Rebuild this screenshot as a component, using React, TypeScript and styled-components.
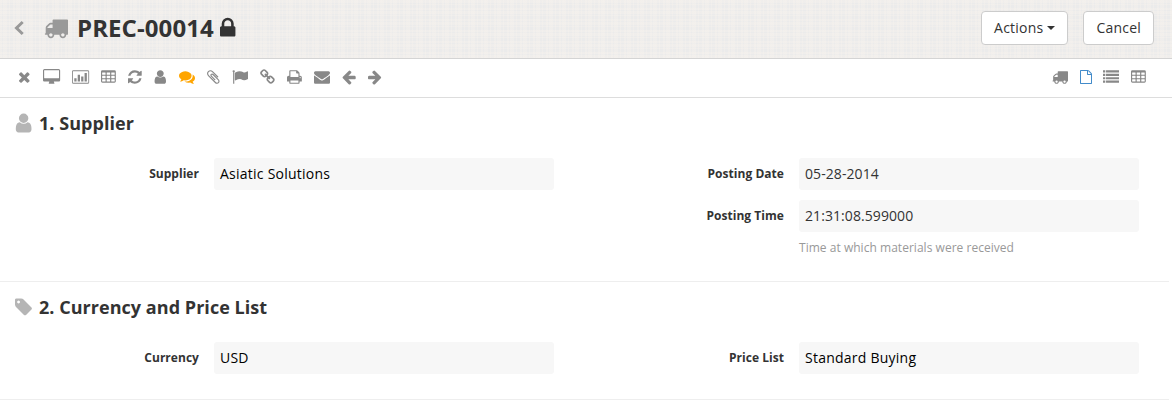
import React from "react";
import styled, { createGlobalStyle } from "styled-components";

const Global = createGlobalStyle`
  * { box-sizing: border-box; }
  body { margin: 0; background: #fff; color: #333; font: 14px/20px "Open Sans", sans-serif; }
`;

type Glyph = { x: number; w: number; d: string };

const glyphs: Record<string, Glyph> = {
  close: { x: 192, w: 1408, d: "M1490 1322q0 40-28 68l-136 136q-28 28-68 28t-68-28l-294-294-294 294q-28 28-68 28t-68-28l-136-136q-28-28-28-68t28-68l294-294-294-294q-28-28-28-68t28-68l136-136q28-28 68-28t68 28l294 294 294-294q28-28 68-28t68 28l136 136q28 28 28 68t-28 68l-294 294 294 294q28 28 28 68z" },
  desktop: { x: -64, w: 1920, d: "M1728 992v-832q0-13-9.5-22.5t-22.5-9.5h-1600q-13 0-22.5 9.5t-9.5 22.5v832q0 13 9.5 22.5t22.5 9.5h1600q13 0 22.5-9.5t9.5-22.5zm128-832v1088q0 66-47 113t-113 47h-544q0 37 16 77.5t32 71 16 43.5q0 26-19 45t-45 19h-512q-26 0-45-19t-19-45q0-14 16-44t32-70 16-78h-544q-66 0-113-47t-47-113v-1088q0-66 47-113t113-47h1600q66 0 113 47t47 113z" },
  chart: { x: 0, w: 1920, d: "M512 1024v384h-256v-384zM896 640v768h-256v-768zM1280 832v576h-256v-576zM1664 448v960h-256v-960zM1792 1536q32 0 32-32v-1216q0-32-32-32h-1664q-32 0-32 32v1216q0 32 32 32zM1920 288v1216q0 160-160 160h-1600q-160 0-160-160v-1216q0-160 160-160h1600q160 0 160 160z" },
  table: { x: 64, w: 1664, d: "M576 1376v-192q0-32-32-32h-320q-32 0-32 32v192q0 32 32 32h320q32 0 32-32zM576 992v-192q0-32-32-32h-320q-32 0-32 32v192q0 32 32 32h320q32 0 32-32zM1088 1376v-192q0-32-32-32h-320q-32 0-32 32v192q0 32 32 32h320q32 0 32-32zM576 608v-192q0-32-32-32h-320q-32 0-32 32v192q0 32 32 32h320q32 0 32-32zM1088 992v-192q0-32-32-32h-320q-32 0-32 32v192q0 32 32 32h320q32 0 32-32zM1600 1376v-192q0-32-32-32h-320q-32 0-32 32v192q0 32 32 32h320q32 0 32-32zM1088 608v-192q0-32-32-32h-320q-32 0-32 32v192q0 32 32 32h320q32 0 32-32zM1600 992v-192q0-32-32-32h-320q-32 0-32 32v192q0 32 32 32h320q32 0 32-32zM1600 608v-192q0-32-32-32h-320q-32 0-32 32v192q0 32 32 32h320q32 0 32-32zM1728 288v1088q0 160-160 160h-1344q-160 0-160-160v-1088q0-160 160-160h1344q160 0 160 160z" },
  refresh: { x: 128, w: 1536, d: "M1639 1056q0 5-1 7-64 268-268 434.5t-478 166.5q-146 0-282.5-55t-243.5-157l-129 129q-19 19-45 19t-45-19-19-45v-448q0-26 19-45t45-19h448q26 0 45 19t19 45-19 45l-137 137q71 66 161 102t187 36q134 0 250-65t186-179q11-17 53-117 8-23 30-23h192q13 0 22.5 9.5t9.5 22.5zm25-800v448q0 26-19 45t-45 19h-448q-26 0-45-19t-19-45 19-45l138-138q-148-137-349-137-134 0-250 65t-186 179q-11 17-53 117-8 23-30 23h-199q-13 0-22.5-9.5t-9.5-22.5v-7q65-268 270-434.5t480-166.5q146 0 284 55.5t245 156.5l130-129q19-19 45-19t45 19 19 45z" },
  user: { x: 192, w: 1408, d: "M1536 1399q0 109-62.5 187t-150.5 78h-854q-88 0-150.5-78t-62.5-187q0-85 8.5-160.5t31.5-152 58.5-131 94-89 134.5-34.5q131 128 313 128t313-128q76 0 134.5 34.5t94 89 58.5 131 31.5 152 8.5 160.5zm-256-887q0 159-112.5 271.5t-271.5 112.5-271.5-112.5-112.5-271.5 112.5-271.5 271.5-112.5 271.5 112.5 112.5 271.5z" },
  comments: { x: 0, w: 1792, d: "M1408 768q0 139-94 257t-256.5 186.5-353.5 68.5q-86 0-176-16-124 88-278 128-36 9-86 16h-3q-11 0-20.5-8t-11.5-21q-1-3-1-6.5t.5-6.5 2-6l2.5-5 3.5-5.5 4-5 4.5-5 4-4.5q5-6 23-25t26-29.5 22.5-29 25-38.5 20.5-44q-124-72-195-177t-71-224q0-139 94-257t256.5-186.5 353.5-68.5 353.5 68.5 256.5 186.5 94 257zm384 256q0 120-71 224.5t-195 176.5q10 24 20.5 44t25 38.5 22.5 29 26 29.5 23 25q1 1 4 4.5t4.5 5 4 5 3.5 5.5l2.5 5 2 6 .5 6.5-1 6.5q-3 14-13 22t-22 7q-50-7-86-16-154-40-278-128-90 16-176 16-271 0-472-132 58 4 88 4 161 0 309-45t264-129q125-92 192-212t67-254q0-77-23-152 129 71 204 178t75 230z" },
  clip: { x: 192, w: 1408, d: "M1596 1385q0 117-79 196t-196 79q-135 0-235-100l-777-776q-113-115-113-271 0-159 110-270t269-111q158 0 273 113l605 606q10 10 10 22 0 16-30.5 46.5t-46.5 30.5q-13 0-23-10l-606-607q-79-77-181-77-106 0-179 75t-73 181q0 105 76 181l776 777q63 63 145 63 64 0 106-42t42-106q0-82-63-145l-581-581q-26-24-60-24-29 0-48 19t-19 48q0 32 25 59l410 410q10 10 10 22 0 16-31 47t-47 31q-12 0-22-10l-410-410q-63-61-63-149 0-82 57-139t139-57q88 0 149 63l581 581q100 98 100 235z" },
  flag: { x: 0, w: 1792, d: "M320 256q0 72-64 110v1266q0 13-9.5 22.5t-22.5 9.5h-64q-13 0-22.5-9.5t-9.5-22.5v-1266q-64-38-64-110 0-53 37.5-90.5t90.5-37.5 90.5 37.5 37.5 90.5zm1472 64v763q0 25-12.5 38.5t-39.5 27.5q-215 116-369 116-61 0-123.5-22t-108.5-48-115.5-48-142.5-22q-192 0-464 146-17 9-33 9-26 0-45-19t-19-45v-742q0-32 31-55 21-14 79-43 236-120 421-120 107 0 200 29t219 88q38 19 88 19 54 0 117.5-21t110-47 88-47 54.5-21q26 0 45 19t19 45z" },
  link: { x: 64, w: 1664, d: "M1520 1216q0-40-28-68l-208-208q-28-28-68-28-42 0-72 32 3 3 19 18.5t21.5 21.5 15 19 13 25.5 3.5 27.5q0 40-28 68t-68 28q-15 0-27.5-3.5t-25.5-13-19-15-21.5-21.5-18.5-19q-33 31-33 73 0 40 28 68l206 207q27 27 68 27 40 0 68-26l147-146q28-28 28-67zm-703-705q0-40-28-68l-206-207q-28-28-68-28-39 0-68 27l-147 146q-28 28-28 67 0 40 28 68l208 208q27 27 68 27 42 0 72-31-3-3-19-18.5t-21.5-21.5-15-19-13-25.5-3.5-27.5q0-40 28-68t68-28q15 0 27.5 3.5t25.5 13 19 15 21.5 21.5 18.5 19q33-31 33-73zm895 705q0 120-85 203l-147 146q-83 83-203 83-121 0-204-85l-206-207q-83-83-83-203 0-123 88-209l-88-88q-86 88-208 88-120 0-204-84l-208-208q-84-84-84-204t85-203l147-146q83-83 203-83 121 0 204 85l206 207q83 83 83 203 0 123-88 209l88 88q86-88 208-88 120 0 204 84l208 208q84 84 84 204z" },
  print: { x: 64, w: 1664, d: "M448 1536h896v-256h-896v256zm0-640h896v-384h-160q-40 0-68-28t-28-68v-160h-640v640zm1152 64q0-26-19-45t-45-19-45 19-19 45 19 45 45 19 45-19 19-45zm128 0v416q0 13-9.5 22.5t-22.5 9.5h-224v160q0 40-28 68t-68 28h-960q-40 0-68-28t-28-68v-160h-224q-13 0-22.5-9.5t-9.5-22.5v-416q0-79 56.5-135.5t135.5-56.5h64v-544q0-40 28-68t68-28h672q40 0 88 20t76 48l152 152q28 28 48 76t20 88v256h64q79 0 135.5 56.5t56.5 135.5z" },
  envelope: { x: 0, w: 1792, d: "M1792 710v794q0 66-47 113t-113 47h-1472q-66 0-113-47t-47-113v-794q44 49 101 87 362 246 497 345 57 42 92.5 65.5t94.5 48 110 24.5h2q51 0 110-24.5t94.5-48 92.5-65.5q170-123 498-345 57-39 100-87zm0-294q0 79-49 151t-122 123q-376 261-468 325-10 7-42.5 31t-54 38.5-52 32.5-57.5 27-50 9h-2q-23 0-50-9t-57.5-27-52-32.5-54-38.5-42.5-31q-91-64-262-182.5t-205-142.5q-62-42-117-115.5t-55-136.5q0-78 41.5-130t118.5-52h1472q65 0 112.5 47t47.5 113z" },
  arrow: { x: 128, w: 1536, d: "M1664 896v128q0 53-32.5 90.5t-84.5 37.5h-704l293 294q38 36 38 90t-38 90l-75 76q-37 37-90 37-52 0-91-37l-651-652q-37-37-37-90 0-52 37-91l651-650q38-38 91-38 52 0 90 38l75 74q38 38 38 91t-38 91l-293 293h704q52 0 84.5 37.5t32.5 90.5z" },
  truck: { x: 0, w: 1792, d: "M640 1408q0-52-38-90t-90-38-90 38-38 90 38 90 90 38 90-38 38-90zm-384-512h384v-256h-158q-13 0-22 9l-195 195q-9 9-9 22v30zm1280 512q0-52-38-90t-90-38-90 38-38 90 38 90 90 38 90-38 38-90zm256-1088v1024q0 15-4 26.5t-13.5 18.5-16.5 11.5-23.5 6-22.5 2-25.5 0-22.5-.5q0 106-75 181t-181 75-181-75-75-181h-384q0 106-75 181t-181 75-181-75-75-181h-64q-3 0-22.5.5t-25.5 0-22.5-2-23.5-6-16.5-11.5-13.5-18.5-4-26.5q0-26 19-45t45-19v-320q0-8-.5-35t0-38 2.5-34.5 6.5-37 14-30.5 22.5-30l198-198q19-19 50.5-32t58.5-13h160v-192q0-26 19-45t45-19h1024q26 0 45 19t19 45z" },
  lock: { x: 320, w: 1152, d: "M640 768h512v-192q0-106-75-181t-181-75-181 75-75 181v192zm832 96v576q0 40-28 68t-68 28h-960q-40 0-68-28t-28-68v-576q0-40 28-68t68-28h32v-192q0-184 132-316t316-132 316 132 132 316v192h32q40 0 68 28t28 68z" },
  file: { x: 128, w: 1536, d: "M1596 380q28 28 48 76t20 88v1152q0 40-28 68t-68 28h-1344q-40 0-68-28t-28-68v-1600q0-40 28-68t68-28h896q40 0 88 20t76 48zm-444-244v376h376q-10-29-22-41l-313-313q-12-12-41-22zm384 1528v-1024h-416q-40 0-68-28t-28-68v-416h-768v1536h1280z" },
  list: { x: 0, w: 1792, d: "M0 130h256v250h-256zM340 130h1452v250h-1452zM0 520h256v250h-256zM340 520h1452v250h-1452zM0 910h256v250h-256zM340 910h1452v250h-1452zM0 1300h256v250h-256zM340 1300h1452v250h-1452z" },
  tag: { x: 128, w: 1515, d: "M576 448q0-53-37.5-90.5t-90.5-37.5-90.5 37.5-37.5 90.5 37.5 90.5 90.5 37.5 90.5-37.5 37.5-90.5zm1067 576q0 53-37 90l-491 492q-39 37-91 37-53 0-90-37l-715-716q-38-37-64.5-101t-26.5-117v-416q0-52 38-90t90-38h416q53 0 117 26.5t102 64.5l715 714q37 39 37 91z" },
};

const Svg = styled.svg<{ $flip?: boolean }>`
  display: block;
  flex: none;
  overflow: visible;
  fill: currentColor;
  fill-rule: evenodd;
  transform: ${(p) => (p.$flip ? "scaleX(-1)" : "none")};
`;

function Icon({ name, size = 16, flip }: { name: string; size?: number; flip?: boolean }) {
  const g = glyphs[name];
  return (
    <Svg $flip={flip} width={(g.w / 1792) * size} height={size} viewBox={`${g.x} 0 ${g.w} 1792`}>
      <path d={g.d} />
    </Svg>
  );
}

const Header = styled.header`
  display: flex;
  align-items: center;
  height: 59px;
  padding: 0 18px 2px 14px;
  border-bottom: 1px solid #d4d4d4;
  background-color: #ebebeb;
  background-image:
    repeating-linear-gradient(90deg, rgba(250, 244, 238, 0.3) 0 2px, transparent 2px 3px, rgba(250, 244, 238, 0.3) 3px 7px, transparent 7px 9px, rgba(250, 244, 238, 0.3) 9px 10px, transparent 10px 13px),
    repeating-linear-gradient(0deg, rgba(250, 244, 238, 0.3) 0 3px, transparent 3px 4px, rgba(250, 244, 238, 0.3) 4px 6px, transparent 6px 9px, rgba(250, 244, 238, 0.3) 9px 10px, transparent 10px 11px);
`;

const Back = styled.svg`
  flex: none;
  width: 10px;
  height: 16px;
  margin-right: 20px;
  fill: none;
  stroke: #999;
  stroke-width: 3;
`;

const TitleIcon = styled.span`
  color: #999;
  margin-right: 9px;
`;

const Title = styled.h1`
  margin: 0 6px 0 0;
  font-size: 24px;
  line-height: 32px;
  font-weight: 700;
  letter-spacing: 0.08px;
`;

const Buttons = styled.div`
  display: flex;
  gap: 15px;
  margin-left: auto;
`;

const Button = styled.button`
  display: flex;
  align-items: center;
  gap: 4px;
  height: 34px;
  padding: 0 12px;
  border: 1px solid #ccc;
  border-radius: 4px;
  background: #fff;
  color: #333;
  font: 14px/20px "Open Sans", sans-serif;
  letter-spacing: 0.22px;
`;

const Caret = styled.span`
  border-top: 4px solid #333;
  border-left: 4px solid transparent;
  border-right: 4px solid transparent;
`;

const Toolbar = styled.nav`
  display: flex;
  justify-content: space-between;
  height: 39px;
  padding: 10px 26px 0 18px;
  border-bottom: 1px solid #ddd;
`;

const Group = styled.div<{ $gap: number }>`
  display: flex;
  gap: ${(p) => p.$gap}px;
  height: 16px;
  align-items: center;
`;

const Tool = styled.span<{ $color?: string }>`
  color: ${(p) => p.$color ?? "#888"};
`;

const Section = styled.section<{ $height: number }>`
  height: ${(p) => p.$height}px;
  margin-right: 3px;
  padding-top: 13px;
  border-bottom: 1px solid #eee;
`;

const Heading = styled.h2`
  display: flex;
  align-items: center;
  height: 25px;
  margin: 0 0 22px 15px;
  font-size: 18px;
  line-height: 25px;
  font-weight: 700;
  letter-spacing: 0.04px;
`;

const HeadingIcon = styled.span`
  display: flex;
  width: 24px;
  padding-bottom: 1px;
  color: #b5b5b5;
`;

const Columns = styled.div`
  display: grid;
  grid-template-columns: 585px 585px;
`;

const Column = styled.div`
  display: flex;
  flex-direction: column;
  gap: 10px;
`;

const Field = styled.div`
  display: grid;
  grid-template-columns: 199px 340px;
  column-gap: 15px;
`;

const Label = styled.label`
  text-align: right;
  font-size: 12px;
  line-height: 32px;
  font-weight: 700;
  letter-spacing: 0.04px;
`;

const Value = styled.div<{ $dark?: boolean }>`
  height: 32px;
  padding: 0 6px;
  border-radius: 3px;
  background: #f7f7f7;
  color: ${(p) => (p.$dark ? "#000" : "#333")};
  line-height: 32px;
  letter-spacing: ${(p) => (p.$dark ? 0.24 : 0.08)}px;
`;

const Help = styled.div`
  grid-column: 2;
  padding-top: 7px;
  font-size: 12px;
  line-height: 17px;
  letter-spacing: 0.03px;
  color: #999;
`;

const tools = ["close", "desktop", "chart", "table", "refresh", "user", "comments", "clip", "flag", "link", "print", "envelope"];

export default function App() {
  return (
    <>
      <Global />
      <Header>
        <Back viewBox="0 0 10 16"><path d="M8.700 2 2.500 8l6.200 6" /></Back>
        <TitleIcon><Icon name="truck" size={24} /></TitleIcon>
        <Title>PREC-00014</Title>
        <Icon name="lock" size={24} />
        <Buttons>
          <Button>Actions <Caret /></Button>
          <Button>Cancel</Button>
        </Buttons>
      </Header>
      <Toolbar>
        <Group $gap={12.2}>
          {tools.map((t) => (
            <Tool key={t} $color={t === "comments" ? "#ffa500" : undefined}><Icon name={t} /></Tool>
          ))}
          <Tool><Icon name="arrow" /></Tool>
          <Tool><Icon name="arrow" flip /></Tool>
        </Group>
        <Group $gap={11.7}>
          <Tool><Icon name="truck" /></Tool>
          <Tool $color="#428bca"><Icon name="file" size={14} /></Tool>
          <Tool><Icon name="list" /></Tool>
          <Tool><Icon name="table" /></Tool>
        </Group>
      </Toolbar>
      <Section $height={184}>
        <Heading><HeadingIcon><Icon name="user" size={22} /></HeadingIcon>1. Supplier</Heading>
        <Columns>
          <Column>
            <Field><Label>Supplier</Label><Value $dark>Asiatic Solutions</Value></Field>
          </Column>
          <Column>
            <Field><Label>Posting Date</Label><Value>05-28-2014</Value></Field>
            <Field>
              <Label>Posting Time</Label><Value>21:31:08.599000</Value>
              <Help>Time at which materials were received</Help>
            </Field>
          </Column>
        </Columns>
      </Section>
      <Section $height={118}>
        <Heading><HeadingIcon><Icon name="tag" size={20} /></HeadingIcon>2. Currency and Price List</Heading>
        <Columns>
          <Column>
            <Field><Label>Currency</Label><Value $dark>USD</Value></Field>
          </Column>
          <Column>
            <Field><Label>Price List</Label><Value $dark>Standard Buying</Value></Field>
          </Column>
        </Columns>
      </Section>
    </>
  );
}
